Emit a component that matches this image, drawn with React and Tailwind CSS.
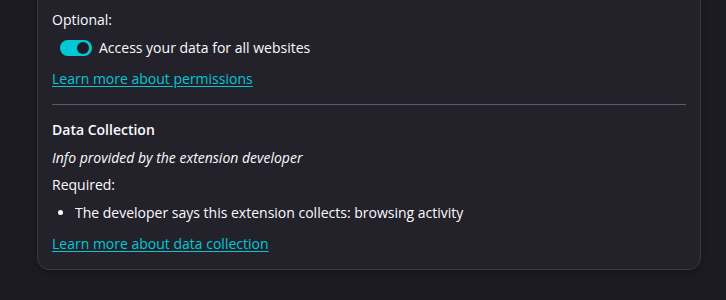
import React from 'react';

function Toggle() {
  return (
    <span className="relative inline-flex h-[16px] w-[32px] shrink-0 items-center rounded-full bg-[#00c8d7]">
      <span className="absolute right-[3px] h-[12px] w-[12px] rounded-full bg-[#1c1b22]" />
    </span>
  );
}

export default function App() {
  return (
    <div
      className="h-[300px] w-[726px] overflow-hidden bg-[#1c1b22] text-[14px] text-[#fbfbfe]"
      style={{ fontFamily: '"Open Sans", "Noto Sans", sans-serif' }}
    >
      <div className="-mt-[20px] ml-[37px] w-[664px] rounded-b-[12px] border border-[#3a3944] bg-[#23222b] px-[14px] pt-[29px] pb-[15px] shadow-[0_2px_6px_rgba(0,0,0,0.3)]">
        <div className="leading-[20px]">Optional:</div>
        <div className="mt-[8px] flex items-center gap-[7px] pl-[8px] leading-[20px]">
          <Toggle />
          <span>Access your data for all websites</span>
        </div>
        <div className="mt-[11px] leading-[20px]">
          <a href="#" className="text-[#00c8d7] underline underline-offset-2">Learn more about permissions</a>
        </div>
        <div className="mt-[15px] border-t border-[#5b5b66]" />
        <div className="mt-[15px] font-semibold leading-[20px]">Data Collection</div>
        <div className="mt-[8px] italic leading-[20px]">Info provided by the extension developer</div>
        <div className="mt-[7px] leading-[20px]">Required:</div>
        <ul className="mt-[8px] list-disc pl-[23px] leading-[20px]">
          <li>The developer says this extension collects: browsing activity</li>
        </ul>
        <div className="mt-[11px] leading-[20px]">
          <a href="#" className="text-[#00c8d7] underline underline-offset-2">Learn more about data collection</a>
        </div>
      </div>
    </div>
  );
}
